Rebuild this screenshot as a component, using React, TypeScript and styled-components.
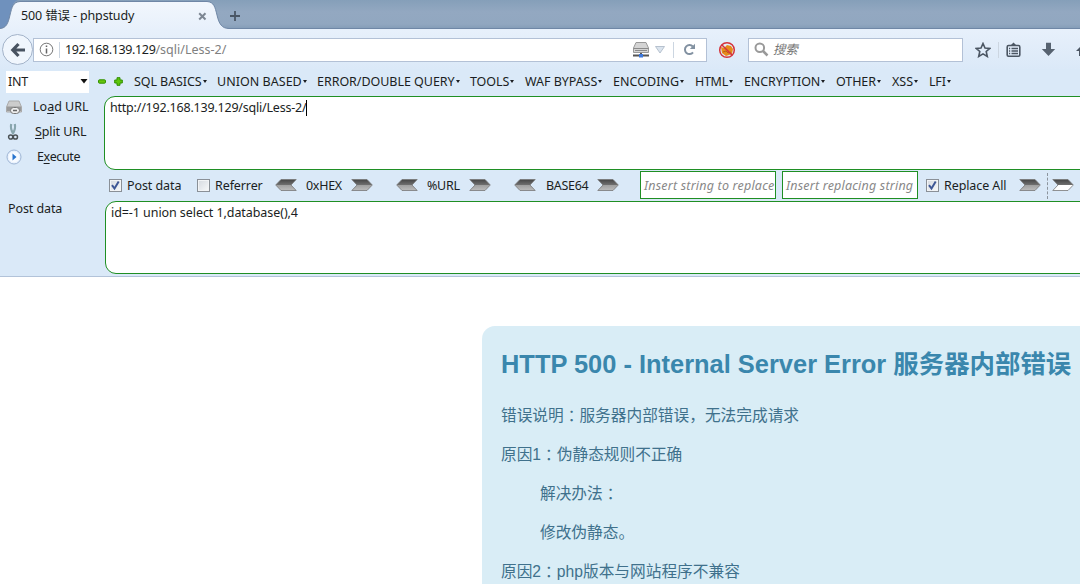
import React from 'react';
import styled, { createGlobalStyle } from 'styled-components';

const ui = '"Noto Sans", "Noto Sans CJK SC", sans-serif';

const Global = createGlobalStyle`
  * { box-sizing: border-box; }
  html, body { margin: 0; background: #fff; overflow: hidden; }
  body { font: 12.5px/18px ${ui}; letter-spacing: -0.3px; color: #1b1e22; }
  svg { flex: none; }
`;

const Page = styled.div`
  width: 1080px;
  height: 584px;
  overflow: hidden;
  background: #fff;
`;
const Text = styled.span<{ $ls?: number; $color?: string }>`
  white-space: nowrap;
  letter-spacing: ${p => p.$ls ?? -0.3}px;
  color: ${p => p.$color ?? 'inherit'};
`;

const TabStrip = styled.header`
  position: relative;
  height: 30px;
  display: flex;
  background: linear-gradient(#859fb9, #93a8c1 40%, #91a7c0 80%, #8099b5);
`;
const TabShape = styled.svg`
  position: absolute;
  left: 0;
  top: 0;
`;
const TabContent = styled.div`
  position: relative;
  width: 220px;
  height: 30px;
  padding: 2px 13px 0 21px;
  display: flex;
  align-items: center;
  justify-content: space-between;
`;
const NewTab = styled.div`
  position: relative;
  padding: 9px 0 0 9px;
`;

const NavBar = styled.nav`
  height: 39px;
  padding-left: 2px;
  display: flex;
  align-items: center;
  background: linear-gradient(#e7f0fb, #dbe9f8);
`;
const BackButton = styled.div`
  width: 31px;
  height: 31px;
  flex: none;
  border: 1px solid #a3b3c9;
  border-radius: 50%;
  background: #f0f6fd;
  display: grid;
  place-items: center;
`;
const Field = styled.div<{ $w: number; $ml: number }>`
  width: ${p => p.$w}px;
  height: 24px;
  margin-left: ${p => p.$ml}px;
  border: 1px solid #b3c1d6;
  background: #fff;
  display: flex;
  align-items: center;
  flex: none;
`;
const Divider = styled.i<{ $ml: number; $mr: number }>`
  width: 1px;
  height: 16px;
  margin: 0 ${p => p.$mr}px 0 ${p => p.$ml}px;
  background: #ccd6e1;
  flex: none;
`;
const Spacer = styled.span`flex: 1;`;
const Slot = styled.span<{ $ml: number }>`
  display: flex;
  flex: none;
  margin-left: ${p => p.$ml}px;
`;

const HackBar = styled.section`
  height: 208px;
  background: #dae9f8;
  border-bottom: 1px solid #b2c3d9;
`;
const MenuRow = styled.div`
  height: 27px;
  padding: 1px 0 3px 6px;
  display: flex;
  align-items: center;
`;
const Select = styled.div`
  width: 83px;
  height: 22px;
  padding: 0 1px 0 2px;
  background: #fff;
  display: flex;
  align-items: center;
  justify-content: space-between;
`;
const Menus = styled.div`
  margin-left: 11px;
  display: grid;
  grid-template-columns: 83px 100px 153px 55px 88px 82px 49px 92px 56px 37px 40px;
`;
const MenuItem = styled.div`
  display: flex;
  align-items: center;
`;
const Caret = styled.i`
  margin-left: 1px;
  border: solid transparent;
  border-width: 3px 2.5px 0;
  border-top-color: #1b1e22;
`;
const Columns = styled.div`display: flex;`;
const Actions = styled.div`
  width: 104px;
  height: 104px;
  margin-top: -1px;
  flex: none;
`;
const Action = styled.div<{ $gap: number }>`
  height: 25px;
  padding-left: 6px;
  display: flex;
  align-items: center;
  svg { margin-right: ${p => p.$gap}px; margin-top: -1px; }
  ${Text} { margin-top: -2px; }
  u { text-underline-offset: 2px; }
`;
const Side = styled.div`
  width: 105px;
  height: 73px;
  flex: none;
  margin-top: -1px;
  padding-left: 8px;
`;
const Main = styled.div`
  flex: 1;
  min-width: 0;
`;
const Area = styled.div`
  width: 1000px;
  height: 74px;
  flex: none;
  padding: 2px 5px;
  border: 1px solid #1f8f24;
  border-radius: 11px;
  background: #fff;
  display: flex;
  align-items: flex-start;
`;
const PostArea = styled(Area)`height: 73px;`;
const TextCursor = styled.i`
  width: 1px;
  height: 16px;
  margin-top: 1px;
  background: #000;
`;
const Options = styled.div`
  width: 976px;
  height: 31px;
  padding-left: 5px;
  display: flex;
  align-items: center;
`;
const Check = styled.span`
  width: 13px;
  height: 13px;
  margin-right: 5px;
  flex: none;
  border: 1px solid #8a9097;
  background: linear-gradient(135deg, #d5dae0, #f8f9fa);
  box-shadow: inset 0 0 0 1px #f2f4f6;
  display: grid;
  place-items: center;
`;
const OptionText = styled(Text)<{ $w: number }>`
  width: ${p => p.$w}px;
  flex: none;
`;
const ReplaceInput = styled.div<{ $ml: number }>`
  width: 136px;
  height: 28px;
  margin: -1px 0 0 ${p => p.$ml}px;
  padding-left: 3px;
  flex: none;
  border: 1px solid #1f8f24;
  background: #fff;
  color: #888;
  font-style: italic;
  line-height: 27px;
  letter-spacing: 0.2px;
  white-space: nowrap;
`;
const Dashes = styled.i`
  height: 26px;
  margin: 0 4px 0 6px;
  border-left: 1px dashed #8c949d;
`;

const Viewport = styled.main`padding: 49px 0 0 482px;`;
const ErrorPanel = styled.article`
  width: 640px;
  height: 300px;
  padding: 19px 19px;
  border-radius: 13px 0 0 0;
  background: #d9edf6;
  color: #40718c;
  letter-spacing: 0;
  font-family: "Liberation Sans", "Noto Sans CJK SC", sans-serif;
`;
const Title = styled.h1`
  margin: 0 0 20px;
  font-size: 25.43px;
  line-height: 39px;
  color: #3a87ad;
  white-space: nowrap;
`;
const Para = styled.p<{ $indent?: boolean }>`
  margin: 0 0 15px;
  padding-left: ${p => (p.$indent ? 39 : 0)}px;
  font-size: 15.7px;
  line-height: 24px;
  height: 24px;
  white-space: nowrap;
`;
const Colon = styled.span`
  font-family: "Noto Sans CJK TC", sans-serif;
  line-height: 1;
  vertical-align: -1px;
`;

function Arrow({ left, hollow }: { left?: boolean; hollow?: boolean }) {
  const id = hollow ? 'arrowHollow' : 'arrowSolid';
  return (
    <svg width="22" height="13" viewBox="0 0 22 13">
      <defs>
        <linearGradient id={id} x1="0" y1="0" x2="0" y2="1">
          <stop offset="0" stopColor="#454545" />
          <stop offset=".5" stopColor="#707070" />
          <stop offset=".52" stopColor={hollow ? '#fff' : '#a0a0a0'} />
          <stop offset="1" stopColor={hollow ? '#fff' : '#bcbcbc'} />
        </linearGradient>
      </defs>
      <path d="M.8 .500H16L21.300 6 16 11.500H.8L6 6Z" fill={`url(#${id})`} stroke="#777" strokeWidth=".8"
        transform={left ? 'translate(22 0) scale(-1 1)' : undefined} />
    </svg>
  );
}
const Tick = () => (
  <svg width="11" height="11" viewBox="0 0 11 11"><path d="M2 5.2 4.5 8.5 8.7 1.6" fill="none" stroke="#3e5795" strokeWidth="2" /></svg>
);

const menus: [string, number][] = [
  ['SQL BASICS', -0.08], ['UNION BASED', 0.03], ['ERROR/DOUBLE QUERY', -0.04], ['TOOLS', -0.1], ['WAF BYPASS', -0.05],
  ['ENCODING', 0.05], ['HTML', -0.3], ['ENCRYPTION', -0.1], ['OTHER', -0.1], ['XSS', 0], ['LFI', -0.2],
];

export default function App() {
  return (
    <Page>
      <Global />
      <TabStrip>
        <TabShape width="1080" height="30" viewBox="0 0 1080 30">
          <defs>
            <linearGradient id="tab" x1="0" y1="0" x2="0" y2="1">
              <stop offset="0" stopColor="#f2f7fd" /><stop offset="1" stopColor="#e7f0fb" />
            </linearGradient>
          </defs>
          <path d="M0 0H18C12 2 12 8 10 15 8 24 6 28 0 28.500Z" fill="#6f91bd" />
          <path d="M0 29.500V28.500C6 28 8 24 10 15 12 7 13 2 20 1.500H207C214 2 215 7 217 15 219 24 222 28.500 229 28.500H1080V30H0Z" fill="url(#tab)" />
          <path d="M0 28.500C6 28 8 24 10 15 12 7 13 2 20 1.500H207C214 2 215 7 217 15 219 24 222 28.500 229 28.500H1080" fill="none" stroke="#6f87a6" />
        </TabShape>
        <TabContent>
          <Text $ls={-0.14}>500 错误 - phpstudy</Text>
          <svg width="9" height="9" viewBox="0 0 9 9"><path d="M1.200 1.200 7.500 7.500M7.500 1.200 1.200 7.500" stroke="#7d8793" strokeWidth="2" /></svg>
        </TabContent>
        <NewTab>
          <svg width="12" height="12" viewBox="0 0 12 12"><path d="M6 1V11M1 6H11" stroke="#4a5665" strokeWidth="1.800" /></svg>
        </NewTab>
      </TabStrip>

      <NavBar>
        <BackButton>
          <svg width="16" height="16" viewBox="0 0 16 16"><path d="M8.500 2 2.800 8 8.500 14M3 8H15" fill="none" stroke="#485361" strokeWidth="3.200" /></svg>
        </BackButton>
        <Field $w={674} $ml={0}>
          <Slot $ml={5}>
            <svg width="15" height="15" viewBox="0 0 15 15"><circle cx="7.500" cy="7.500" r="6.300" fill="none" stroke="#777" /><path d="M7.500 6.500V11.500M7.500 3.500V5" stroke="#666" strokeWidth="1.500" /></svg>
          </Slot>
          <Divider $ml={5} $mr={5} />
          <Text $ls={-0.36}>192.168.139.129<Text $color="#808080" $ls={0}>/sqli/Less-2/</Text></Text>
          <Spacer />
          <svg width="18" height="17" viewBox="0 0 18 17">
            <path d="M4 1.500H14L16.500 7V11.500H1.500V7Z" fill="#d4d4d4" stroke="#999" />
            <path d="M1.500 7.500H16.500M3 9.500H15" stroke="#8a8a8a" />
            <path d="M1 14.500H17M9 12V14" stroke="#555" strokeWidth="2" /><rect x="7" y="13" width="4" height="3.500" fill="#3d79df" />
          </svg>
          <Slot $ml={5}><svg width="10" height="8" viewBox="0 0 10 8"><path d="M.5 .5H9.500L5 7Z" fill="#dbe4ee" stroke="#b6c1ce" /></svg></Slot>
          <Divider $ml={8} $mr={9} />
          <svg width="13" height="13" viewBox="0 0 13 13"><path d="M10 9.300A4.500 4.500 0 1 1 9.800 3.500" fill="none" stroke="#8291a1" strokeWidth="2" /><path d="M12 .8V6H6.800Z" fill="#8291a1" /></svg>
          <Slot $ml={10} />
        </Field>
        <Slot $ml={11}>
          <svg width="18" height="18" viewBox="0 0 18 18">
            <path d="M3 6 6 7 9 4 13 5 15 8 14 13 8 15 4 12Z" fill="#e78b1b" /><path d="M5 11 8 10 10 12 13 11" fill="none" stroke="#b8601a" />
            <circle cx="9" cy="9" r="7.300" fill="none" stroke="#d5333b" strokeWidth="1.500" /><path d="M4 4 14 14" stroke="#d5333b" strokeWidth="1.500" />
          </svg>
        </Slot>
        <Field $w={215} $ml={12}>
          <Slot $ml={5}>
            <svg width="15" height="15" viewBox="0 0 15 15"><circle cx="5.800" cy="5.800" r="4.300" fill="none" stroke="#999" strokeWidth="2" /><path d="M9 9 13.500 13.500" stroke="#999" strokeWidth="2.500" /></svg>
          </Slot>
          <Slot $ml={4}><Text $color="#777"><i>搜索</i></Text></Slot>
        </Field>
        <Slot $ml={12}>
          <svg width="16" height="16" viewBox="0 0 16 16"><path d="M8 1.500 10 6 14.800 6.400 11.200 9.500 12.300 14.500 8 11.900 3.700 14.500 4.800 9.500 1.200 6.400 6 6Z" fill="none" stroke="#4b5663" strokeWidth="1.600" /></svg>
        </Slot>
        <Divider $ml={7} $mr={7} />
        <svg width="15" height="16" viewBox="0 0 15 16"><path d="M2.500 3.500H12.500Q13.800 3.500 13.800 5V13Q13.800 14.200 12.500 14.200H2.500Q1.200 14.200 1.200 13V5Q1.200 3.500 2.500 3.500Z" fill="none" stroke="#4b5663" strokeWidth="1.600" /><path d="M4 4 7.500 .5 11 4Z" fill="#4b5663" /><path d="M3 6.500H4.200M5.500 6.500H12M3 9H4.200M5.500 9H12M3 11.500H4.200M5.500 11.500H12" stroke="#4b5663" strokeWidth="1.300" /></svg>
        <Slot $ml={20}>
          <svg width="15" height="15" viewBox="0 0 15 15"><path d="M5 .8H10V7H14.200L7.500 14 .8 7H5Z" fill="#566270" /></svg>
        </Slot>
        <Slot $ml={20}>
          <svg width="16" height="16" viewBox="0 0 16 16"><path d="M8 1 0 9H3V14H13V9H16Z" fill="#4b5663" /></svg>
        </Slot>
      </NavBar>

      <HackBar>
        <MenuRow>
          <Select>
            <Text>INT</Text>
            <svg width="8" height="5" viewBox="0 0 8 5"><path d="M.5 0H7.500L4 4.500Z" fill="#111" /></svg>
          </Select>
          <Slot $ml={9}><svg width="8" height="5" viewBox="0 0 8 5"><rect x=".5" y=".8" width="7" height="3.400" rx="1" fill="#66c50e" stroke="#329000" /></svg></Slot>
          <Slot $ml={8}><svg width="9" height="9" viewBox="0 0 9 9"><path d="M3 .7H6V3H8.300V6H6V8.300H3V6H.7V3H3Z" fill="#5dc60c" stroke="#329000" strokeLinejoin="round" /></svg></Slot>
          <Menus>
            {menus.map(([label, ls]) => <MenuItem key={label}><Text $ls={ls}>{label}</Text><Caret /></MenuItem>)}
          </Menus>
        </MenuRow>
        <Columns>
          <Actions>
            <Action $gap={11}>
              <svg width="16" height="16" viewBox="0 0 16 16"><path d="M3 2H13L15.500 8V13H.5V8Z" fill="#ccc" stroke="#aaa" /><path d="M1 7.500H15V12H1Z" fill="#999" /><rect x="4.500" y="8.500" width="9" height="6" rx="3" fill="#eee" stroke="#777" /><path d="M7 11.500H11" stroke="#666" strokeWidth="1.500" /></svg>
              <Text $ls={0}>Lo<u>a</u>d URL</Text>
            </Action>
            <Action $gap={13}>
              <svg width="16" height="18" viewBox="0 0 16 18"><path d="M5.200 1Q4 6 7.500 11M8.800 1Q10 6 6.500 11" fill="none" stroke="#88a5ad" strokeWidth="2.200" /><circle cx="4.700" cy="14" r="2.100" fill="none" stroke="#4b5256" strokeWidth="1.500" /><circle cx="9.400" cy="14" r="2.100" fill="none" stroke="#4b5256" strokeWidth="1.500" /></svg>
              <Text $ls={-0.1}><u>S</u>plit URL</Text>
            </Action>
            <Action $gap={15}>
              <svg width="16" height="16" viewBox="0 0 16 16"><circle cx="8" cy="8" r="7" fill="#e9f2fd" stroke="#9eb5d5" /><circle cx="8" cy="8" r="5.300" fill="#f8fbff" /><path d="M6.500 4.500 10.500 8 6.500 11.500Z" fill="#2874ce" /></svg>
              <Text $ls={-0.35}>E<u>x</u>ecute</Text>
            </Action>
          </Actions>
          <Main>
            <Area><Text $ls={-0.21}>http://192.168.139.129/sqli/Less-2/</Text><TextCursor /></Area>
            <Options>
              <Check><Tick /></Check><OptionText $w={70} $ls={-0.08}>Post data</OptionText>
              <Check /><OptionText $w={60} $ls={-0.1}>Referrer</OptionText>
              <Arrow left /><Slot $ml={9} /><OptionText $w={45}>0xHEX</OptionText><Arrow />
              <Slot $ml={23} /><Arrow left /><Slot $ml={9} /><OptionText $w={42}>%URL</OptionText><Arrow />
              <Slot $ml={23} /><Arrow left /><Slot $ml={10} /><OptionText $w={51}>BASE64</OptionText><Arrow />
              <ReplaceInput $ml={21}>Insert string to replace</ReplaceInput>
              <ReplaceInput $ml={6}>Insert replacing string</ReplaceInput>
              <Slot $ml={8} /><Check><Tick /></Check><OptionText $w={75} $ls={-0.1}>Replace All</OptionText>
              <Arrow /><Dashes /><Arrow hollow />
            </Options>
          </Main>
        </Columns>
        <Columns>
          <Side><Text $ls={-0.1}>Post data</Text></Side>
          <PostArea><Text $ls={-0.07}>id=-1 union select 1,database(),4</Text></PostArea>
        </Columns>
      </HackBar>

      <Viewport>
        <ErrorPanel>
          <Title>HTTP 500 - Internal Server Error 服务器内部错误</Title>
          <Para>错误说明<Colon>：</Colon>服务器内部错误，无法完成请求</Para>
          <Para>原因1<Colon>：</Colon>伪静态规则不正确</Para>
          <Para $indent>解决办法<Colon>：</Colon></Para>
          <Para $indent>修改伪静态。</Para>
          <Para>原因2<Colon>：</Colon>php版本与网站程序不兼容</Para>
        </ErrorPanel>
      </Viewport>
    </Page>
  );
}
